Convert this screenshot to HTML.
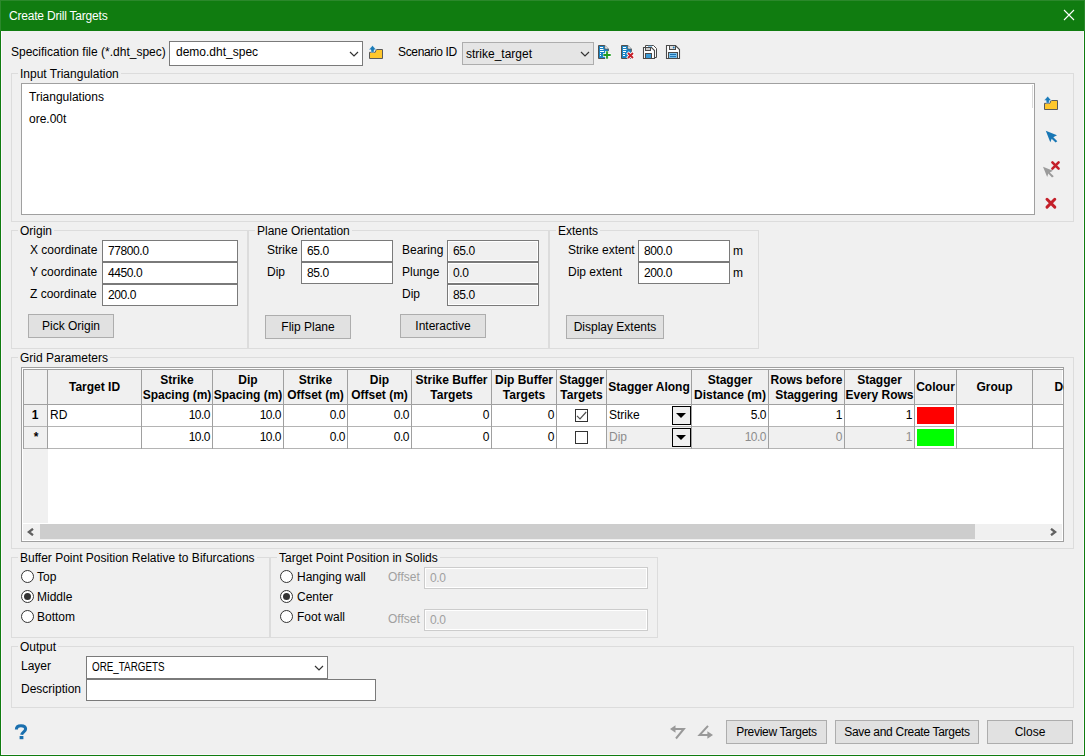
<!DOCTYPE html>
<html><head><meta charset="utf-8">
<style>
*{box-sizing:border-box;margin:0;padding:0}
html,body{width:1085px;height:756px;overflow:hidden;background:#f0f0f0}
body{font-family:"Liberation Sans",sans-serif;font-size:12px;color:#000;position:relative}
.a{position:absolute}
.t{position:absolute;white-space:nowrap;line-height:14px;height:14px}
.win{left:0;top:0;width:1085px;height:756px;border:1px solid #107c10;border-top:none;background:#f0f0f0}
.title{left:0;top:0;width:1085px;height:31px;background:#107c10}
.edit{position:absolute;background:#fff;border:1px solid #7a7a7a}
.ro{position:absolute;background:#f0f0f0;border:1px solid #7a7a7a;box-shadow:inset 0 0 0 1px #fff}
.dis{position:absolute;background:#f0f0f0;border:1px solid #cccccc;box-shadow:inset 0 0 0 1px #fff}
.btn{position:absolute;background:#e1e1e1;border:1px solid #adadad;text-align:center}
.grp{position:absolute;border:1px solid #dcdcdc}
.gt{position:absolute;white-space:nowrap;line-height:14px;height:14px;background:#f0f0f0;padding:0 2px;margin-top:1px}
.vl{position:absolute;width:1px;background:#a0a0a0}
.hl{position:absolute;height:1px;background:#a0a0a0}
.hd{position:absolute;font-weight:bold;text-align:center;line-height:15px;white-space:nowrap;font-size:12px}
.num{position:absolute;text-align:right;line-height:14px;white-space:nowrap;letter-spacing:-0.5px}
.radio{position:absolute;width:13px;height:13px;border:1px solid #333;border-radius:50%;background:#fff}
.radio.on::after{content:"";position:absolute;left:2px;top:2px;width:7px;height:7px;border-radius:50%;background:#333}
.gray{color:#a0a0a0}
#tbl .gray{color:#8c8c8c}
</style></head><body>
<div class="a win"></div>
<div class="a title"></div>
<div class="a" style="left:0;top:0;width:1085px;height:1px;background:#2b882b"></div>
<div class="a" style="left:0;top:0;width:1px;height:31px;background:#2b882b"></div>
<div class="a" style="left:1084px;top:0;width:1px;height:31px;background:#2b882b"></div>
<div class="a" style="left:1px;top:31px;width:1px;height:724px;background:#fcf8fc"></div>
<div class="a" style="left:1083px;top:31px;width:1px;height:724px;background:#fcf8fc"></div>
<div class="a" style="left:1px;top:754px;width:1083px;height:1px;background:#fcf8fc"></div>
<div class="t" style="left:9px;top:9px;color:#fff;letter-spacing:-0.2px">Create Drill Targets</div>
<svg class="a" style="left:1063px;top:9px" width="12" height="12" viewBox="0 0 12 12"><path d="M1 1L11 11M11 1L1 11" stroke="#fff" stroke-width="1.1"/></svg>

<!-- spec row -->
<div class="t" style="left:11px;top:45px">Specification file (*.dht_spec)</div>
<div class="edit" style="left:169px;top:41px;width:194px;height:25px"></div>
<div class="t" style="left:176px;top:45px">demo.dht_spec</div>
<svg class="a" style="left:349px;top:50.7px" width="10" height="6" viewBox="0 0 10 6"><path d="M1 1L5 5L9 1" stroke="#333" fill="none" stroke-width="1.2"/></svg>
<div class="t" style="left:398px;top:45px;letter-spacing:-0.35px">Scenario ID</div>
<div class="btn" style="left:462px;top:42px;width:132px;height:23px;background:#e5e5e5"></div>
<div class="t" style="left:466px;top:47px">strike_target</div>
<svg class="a" style="left:580px;top:50.7px" width="10" height="6" viewBox="0 0 10 6"><path d="M1 1L5 5L9 1" stroke="#333" fill="none" stroke-width="1.2"/></svg>

<!-- Input Triangulation -->
<div class="grp" style="left:11px;top:73px;width:1063px;height:149px"></div>
<div class="gt" style="left:18px;top:66px">Input Triangulation</div>
<div class="a" style="left:21px;top:83px;width:1014px;height:132px;background:#fff;border:1px solid #a0a0a0"></div>
<div class="a" style="left:1032px;top:85px;width:1px;height:23px;background:#dadada"></div>
<div class="t" style="left:29px;top:90px">Triangulations</div>
<div class="t" style="left:29px;top:112px">ore.00t</div>

<!-- Origin -->
<div class="grp" style="left:11px;top:230px;width:237px;height:119px"></div>
<div class="gt" style="left:18px;top:223px">Origin</div>
<div class="t" style="left:30px;top:243px">X coordinate</div>
<div class="t" style="left:30px;top:265px">Y coordinate</div>
<div class="t" style="left:30px;top:287px">Z coordinate</div>
<div class="edit" style="left:102px;top:240px;width:136px;height:22px"></div>
<div class="edit" style="left:102px;top:262px;width:136px;height:22px"></div>
<div class="edit" style="left:102px;top:284px;width:136px;height:22px"></div>
<div class="t" style="left:108px;top:244px;letter-spacing:-0.4px">77800.0</div>
<div class="t" style="left:108px;top:266px;letter-spacing:-0.4px">4450.0</div>
<div class="t" style="left:108px;top:288px;letter-spacing:-0.4px">200.0</div>
<div class="btn" style="left:28px;top:314px;width:86px;height:24px;line-height:22px">Pick Origin</div>

<!-- Plane Orientation -->
<div class="grp" style="left:248px;top:230px;width:301px;height:119px"></div>
<div class="gt" style="left:255px;top:223px">Plane Orientation</div>
<div class="t" style="left:267px;top:243px">Strike</div>
<div class="t" style="left:267px;top:265px">Dip</div>
<div class="edit" style="left:301px;top:240px;width:92px;height:22px"></div>
<div class="edit" style="left:301px;top:262px;width:92px;height:22px"></div>
<div class="t" style="left:307px;top:244px;letter-spacing:-0.4px">65.0</div>
<div class="t" style="left:307px;top:266px;letter-spacing:-0.4px">85.0</div>
<div class="t" style="left:402px;top:243px">Bearing</div>
<div class="t" style="left:402px;top:265px">Plunge</div>
<div class="t" style="left:402px;top:287px">Dip</div>
<div class="ro" style="left:447px;top:240px;width:92px;height:22px"></div>
<div class="ro" style="left:447px;top:262px;width:92px;height:22px"></div>
<div class="ro" style="left:447px;top:284px;width:92px;height:22px"></div>
<div class="t" style="left:453px;top:244px;letter-spacing:-0.4px">65.0</div>
<div class="t" style="left:453px;top:266px;letter-spacing:-0.4px">0.0</div>
<div class="t" style="left:453px;top:288px;letter-spacing:-0.4px">85.0</div>
<div class="btn" style="left:265px;top:315px;width:86px;height:24px;line-height:22px">Flip Plane</div>
<div class="btn" style="left:400px;top:314px;width:86px;height:24px;line-height:22px">Interactive</div>

<!-- Extents -->
<div class="grp" style="left:549px;top:230px;width:210px;height:119px"></div>
<div class="gt" style="left:556px;top:223px">Extents</div>
<div class="t" style="left:568px;top:243px">Strike extent</div>
<div class="t" style="left:568px;top:265px">Dip extent</div>
<div class="edit" style="left:638px;top:240px;width:92px;height:22px"></div>
<div class="edit" style="left:638px;top:262px;width:92px;height:22px"></div>
<div class="t" style="left:644px;top:244px;letter-spacing:-0.4px">800.0</div>
<div class="t" style="left:644px;top:266px;letter-spacing:-0.4px">200.0</div>
<div class="t" style="left:733px;top:244px">m</div>
<div class="t" style="left:733px;top:266px">m</div>
<div class="btn" style="left:566px;top:315px;width:98px;height:24px;line-height:22px">Display Extents</div>

<!-- Grid Parameters -->
<div class="grp" style="left:11px;top:357px;width:1063px;height:192px"></div>
<div class="gt" style="left:18px;top:350px">Grid Parameters</div>
<div id="tbl"><div class="a" style="left:0;top:0;width:1064px;height:756px;overflow:hidden"><div class="a" style="left:21px;top:367px;width:1043px;height:175px;border:1px solid #a0a0a0;background:#fff"></div>
<div class="a" style="left:23px;top:369px;width:1039px;height:35px;background:#f0f0f0"></div>
<div class="a" style="left:23px;top:369px;width:25px;height:154px;background:#f0f0f0"></div>
<div class="a" style="left:607px;top:427px;width:307px;height:21px;background:#f0f0f0"></div>
<div class="hl" style="left:23px;top:369px;width:1040px"></div>
<div class="hl" style="left:23px;top:404px;width:1040px"></div>
<div class="hl" style="left:23px;top:426px;width:1040px;background:#b4b4b4"></div>
<div class="hl" style="left:23px;top:448px;width:1040px;background:#b4b4b4"></div>
<div class="vl" style="left:23px;top:369px;height:80px"></div>
<div class="vl" style="left:47px;top:369px;height:80px"></div>
<div class="vl" style="left:141px;top:369px;height:80px"></div>
<div class="vl" style="left:212px;top:369px;height:80px"></div>
<div class="vl" style="left:283px;top:369px;height:80px"></div>
<div class="vl" style="left:347px;top:369px;height:80px"></div>
<div class="vl" style="left:411px;top:369px;height:80px"></div>
<div class="vl" style="left:491px;top:369px;height:80px"></div>
<div class="vl" style="left:556px;top:369px;height:80px"></div>
<div class="vl" style="left:606px;top:369px;height:80px"></div>
<div class="vl" style="left:691px;top:369px;height:80px"></div>
<div class="vl" style="left:768px;top:369px;height:80px"></div>
<div class="vl" style="left:844px;top:369px;height:80px"></div>
<div class="vl" style="left:914px;top:369px;height:80px"></div>
<div class="vl" style="left:956px;top:369px;height:80px"></div>
<div class="vl" style="left:1032px;top:369px;height:80px"></div>
<div class="hd" style="left:48px;top:380px;width:93px">Target ID</div>
<div class="hd" style="left:142px;top:373px;width:70px">Strike<br>Spacing (m)</div>
<div class="hd" style="left:213px;top:373px;width:70px">Dip<br>Spacing (m)</div>
<div class="hd" style="left:284px;top:373px;width:63px">Strike<br>Offset (m)</div>
<div class="hd" style="left:348px;top:373px;width:63px">Dip<br>Offset (m)</div>
<div class="hd" style="left:412px;top:373px;width:79px">Strike Buffer<br>Targets</div>
<div class="hd" style="left:492px;top:373px;width:64px">Dip Buffer<br>Targets</div>
<div class="hd" style="left:557px;top:373px;width:49px">Stagger<br>Targets</div>
<div class="hd" style="left:607px;top:380px;width:84px">Stagger Along</div>
<div class="hd" style="left:692px;top:373px;width:76px">Stagger<br>Distance (m)</div>
<div class="hd" style="left:769px;top:373px;width:75px">Rows before<br>Staggering</div>
<div class="hd" style="left:845px;top:373px;width:69px">Stagger<br>Every Rows</div>
<div class="hd" style="left:915px;top:380px;width:41px">Colour</div>
<div class="hd" style="left:957px;top:380px;width:75px">Group</div>
<div class="hd" style="left:1033px;top:380px;width:109px">Description</div>
<div class="hd" style="left:23px;top:408px;width:24px;font-size:12px">1</div>
<div class="hd" style="left:24px;top:430px;width:24px;font-size:12px">*</div>
<div class="t" style="left:50px;top:408px">RD</div>
<div class="num" style="left:132px;top:408px;width:78px">10.0</div>
<div class="num" style="left:203px;top:408px;width:78px">10.0</div>
<div class="num" style="left:267px;top:408px;width:78px">0.0</div>
<div class="num" style="left:331px;top:408px;width:78px">0.0</div>
<div class="num" style="left:411px;top:408px;width:78px">0</div>
<div class="num" style="left:476px;top:408px;width:78px">0</div>
<div class="num" style="left:688px;top:408px;width:78px">5.0</div>
<div class="num" style="left:764px;top:408px;width:78px">1</div>
<div class="num" style="left:834px;top:408px;width:78px">1</div>
<div class="num" style="left:132px;top:430px;width:78px">10.0</div>
<div class="num" style="left:203px;top:430px;width:78px">10.0</div>
<div class="num" style="left:267px;top:430px;width:78px">0.0</div>
<div class="num" style="left:331px;top:430px;width:78px">0.0</div>
<div class="num" style="left:411px;top:430px;width:78px">0</div>
<div class="num" style="left:476px;top:430px;width:78px">0</div>
<div class="num gray" style="left:688px;top:430px;width:78px">10.0</div>
<div class="num gray" style="left:764px;top:430px;width:78px">0</div>
<div class="num gray" style="left:834px;top:430px;width:78px">1</div>
<div class="a" style="left:575px;top:409px;width:13px;height:13px;border:1px solid #333;background:#fff"></div>
<svg class="a" style="left:575px;top:409px" width="13" height="13" viewBox="0 0 13 13"><path d="M2 6.8L5 9.8L11.2 3" stroke="#505050" stroke-width="1.2" fill="none"/></svg>
<div class="a" style="left:575px;top:431px;width:13px;height:13px;border:1px solid #333;background:#fff"></div>
<div class="t" style="left:609px;top:408px">Strike</div>
<div class="t gray" style="left:609px;top:430px">Dip</div>
<div class="a" style="left:672px;top:406px;width:19px;height:19px;border:1px solid #000;background:#f0f0f0"></div>
<svg class="a" style="left:676px;top:413px" width="10" height="5" viewBox="0 0 10 5"><path d="M0 0H10L5 5Z" fill="#000"/></svg>
<div class="a" style="left:672px;top:428px;width:19px;height:19px;border:1px solid #000;background:#f0f0f0"></div>
<svg class="a" style="left:676px;top:435px" width="10" height="5" viewBox="0 0 10 5"><path d="M0 0H10L5 5Z" fill="#000"/></svg>
<div class="a" style="left:917px;top:407px;width:37px;height:17px;background:#ff0000"></div>
<div class="a" style="left:917px;top:429px;width:37px;height:17px;background:#00ff00"></div>
<div class="a" style="left:23px;top:524px;width:1039px;height:16px;background:#f0f0f0"></div>
<div class="a" style="left:40px;top:524px;width:935px;height:15px;background:#cdcdcd"></div>
<svg class="a" style="left:27px;top:528px" width="8" height="8" viewBox="0 0 8 8"><path d="M6 0.8L1.8 4L6 7.2" stroke="#606060" stroke-width="2.3" fill="none"/></svg>
<svg class="a" style="left:1049px;top:528px" width="8" height="8" viewBox="0 0 8 8"><path d="M2 0.8L6.2 4L2 7.2" stroke="#606060" stroke-width="2.3" fill="none"/></svg></div></div><!--/tbl-->

<!-- Buffer point -->
<div class="grp" style="left:11px;top:557px;width:259px;height:81px"></div>
<div class="gt" style="left:18px;top:550px">Buffer Point Position Relative to Bifurcations</div>
<div class="radio" style="left:21px;top:570px"></div><div class="t" style="left:37px;top:570px">Top</div>
<div class="radio on" style="left:21px;top:590px"></div><div class="t" style="left:37px;top:590px">Middle</div>
<div class="radio" style="left:21px;top:610px"></div><div class="t" style="left:37px;top:610px">Bottom</div>

<!-- Target point -->
<div class="grp" style="left:270px;top:557px;width:388px;height:81px"></div>
<div class="gt" style="left:277px;top:550px">Target Point Position in Solids</div>
<div class="radio" style="left:280px;top:570px"></div><div class="t" style="left:297px;top:570px">Hanging wall</div>
<div class="radio on" style="left:280px;top:590px"></div><div class="t" style="left:297px;top:590px">Center</div>
<div class="radio" style="left:280px;top:610px"></div><div class="t" style="left:297px;top:610px">Foot wall</div>
<div class="t gray" style="left:388px;top:570px">Offset</div>
<div class="t gray" style="left:388px;top:612px">Offset</div>
<div class="dis" style="left:424px;top:567px;width:224px;height:22px"></div>
<div class="dis" style="left:424px;top:609px;width:224px;height:22px"></div>
<div class="t gray" style="left:430px;top:571px;letter-spacing:-0.4px">0.0</div>
<div class="t gray" style="left:430px;top:613px;letter-spacing:-0.4px">0.0</div>

<!-- Output -->
<div class="grp" style="left:11px;top:646px;width:1063px;height:62px"></div>
<div class="gt" style="left:18px;top:639px">Output</div>
<div class="t" style="left:21px;top:659px">Layer</div>
<div class="t" style="left:21px;top:682px">Description</div>
<div class="edit" style="left:86px;top:656px;width:242px;height:23px"></div>
<div class="t" style="left:92px;top:660px;transform:scaleX(0.82);transform-origin:0 0">ORE_TARGETS</div>
<svg class="a" style="left:314px;top:664.7px" width="10" height="6" viewBox="0 0 10 6"><path d="M1 1L5 5L9 1" stroke="#333" fill="none" stroke-width="1.2"/></svg>
<div class="edit" style="left:86px;top:679px;width:290px;height:22px"></div>


<!-- icons -->
<svg class="a" style="left:367px;top:44px" width="17" height="16" viewBox="0 0 17 16">
<path d="M2.5 8.3H8.2L9.3 5.5H15.5V14.5H2.5Z" fill="#ffc72c" stroke="#5a5a5a" stroke-width="1"/>
<path d="M5.5 1.5L9.2 5.8H7.1V8.2H4V5.8H1.8Z" fill="#1a7ab8" stroke="#fff" stroke-width="0.4"/>
</svg>
<svg class="a" style="left:597px;top:44px" width="16" height="16" viewBox="0 0 16 16">
<path d="M1.5 1.5H7.8L11.3 5V14.5H1.5Z" fill="#1a85c6" stroke="#505050" stroke-width="1"/>
<path d="M7.8 1.5V5H11.3" fill="#fff" stroke="#505050" stroke-width="0.8"/>
<path d="M3 3.5H6M3 5.5H6.5M3 7.5H7M3 9.5H4M3 11.5H4" stroke="#fff" stroke-width="1"/>
<path d="M6 9.5H15.5M6 12.5" stroke="none"/>
<rect x="6.3" y="8" width="9" height="8" fill="#f0f0f0" opacity="0"/>
<path d="M10 7V15M6 11H14" stroke="#fff" stroke-width="3.6"/>
<path d="M10 7.3V14.7M6.3 11H13.7" stroke="#1f9a1f" stroke-width="1.8"/>
</svg>
<svg class="a" style="left:620px;top:44px" width="16" height="16" viewBox="0 0 16 16">
<path d="M1.5 1.5H7.8L11.3 5V14.5H1.5Z" fill="#1a85c6" stroke="#505050" stroke-width="1"/>
<path d="M7.8 1.5V5H11.3" fill="#fff" stroke="#505050" stroke-width="0.8"/>
<path d="M3 3.5H6M3 5.5H6.5M3 7.5H6M3 9.5H5M3 11.5H5" stroke="#fff" stroke-width="1"/>
<path d="M7.5 8.5L13.5 14.5M13.5 8.5L7.5 14.5" stroke="#fff" stroke-width="3.6"/>
<path d="M8 9L13 14M13 9L8 14" stroke="#c4202a" stroke-width="1.9"/>
</svg>
<svg class="a" style="left:642px;top:44px" width="16" height="16" viewBox="0 0 16 16">
<path d="M3.5 1.5H11.5L14.5 4.5V13.5H12V6.5L9.5 3.5H3.5Z" fill="#fff" stroke="#4a4a4a" stroke-width="1"/><rect x="6" y="1.8" width="4" height="1.5" fill="#8cc4e8"/>
<path d="M1.5 3.5H9.5L12.5 6.5V14.5H1.5Z" fill="#fff" stroke="#4a4a4a" stroke-width="1.1"/>
<rect x="3.5" y="3.5" width="5" height="3" fill="#ccc" stroke="#4a4a4a" stroke-width="1"/>
<rect x="3.5" y="9.5" width="6" height="5" fill="#3a9ad6" stroke="#4a4a4a" stroke-width="1"/>
</svg>
<svg class="a" style="left:665px;top:44px" width="16" height="16" viewBox="0 0 16 16">
<path d="M1.5 1.5H10.5L14.5 5.5V14.5H1.5Z" fill="#fff" stroke="#4a4a4a" stroke-width="1.1"/>
<rect x="4.5" y="1.5" width="6" height="4" fill="#ddd" stroke="#4a4a4a" stroke-width="1"/>
<circle cx="8.7" cy="3.5" r="0.9" fill="#1a7ab8"/>
<rect x="3.5" y="8.5" width="9" height="6" fill="#7cc3ee" stroke="#4a4a4a" stroke-width="1"/>
<path d="M5 10.5H11M5 12.6H11" stroke="#1a6fb0" stroke-width="1"/>
</svg>
<svg class="a" style="left:1041px;top:95px" width="18" height="16" viewBox="0 0 18 16">
<path d="M3.5 8.3H8.9L10 5.5H16.5V14.5H3.5Z" fill="#ffc72c" stroke="#5a5a5a" stroke-width="1"/>
<path d="M6.7 1.3L10.4 5.6H8.3V8.1H5.2V5.6H3Z" fill="#1a7ab8" stroke="#fff" stroke-width="0.4"/>
</svg>
<svg class="a" style="left:1044px;top:129px" width="16" height="16" viewBox="0 0 16 16">
<path d="M1.8 1.8L13 6.3L9.3 8.2L13.3 12.2L11.6 13.6L7.7 9.7L6.3 13.3Z" fill="#1877b5"/>
</svg>
<svg class="a" style="left:1041px;top:159px" width="20" height="20" viewBox="0 0 20 20">
<path d="M2 7.7L12 11.8L8.8 13.4L12.8 17.3L11 18.4L7.3 14.6L6.2 18Z" fill="#9b9b9b"/>
<path d="M11.4 3.4L17.6 9.6M17.6 3.4L11.4 9.6" stroke="#c4202a" stroke-width="2.6" stroke-linecap="round"/>
</svg>
<svg class="a" style="left:1043px;top:195px" width="16" height="16" viewBox="0 0 16 16">
<path d="M4 4.3L11.8 12.1M11.8 4.3L4 12.1" stroke="#c4202a" stroke-width="3" stroke-linecap="round"/>
</svg>
<svg class="a" style="left:666px;top:722px" width="20" height="20" viewBox="0 0 20 20">
<path d="M4 7L9.5 3.3V10.7Z" fill="#999"/>
<path d="M8 7H17.8L10 16.5" stroke="#999" stroke-width="2" fill="none"/>
</svg>
<svg class="a" style="left:695px;top:722px" width="20" height="20" viewBox="0 0 20 20">
<path d="M13 3.8L4.6 13H14" stroke="#999" stroke-width="2" fill="none"/>
<path d="M18 13L12.4 9.3V16.7Z" fill="#999"/>
</svg>

<!-- bottom -->
<svg class="a" style="left:14px;top:724px" width="14" height="16" viewBox="0 0 14 16"><path d="M2.4 5.4C2.4 2.9 4.4 1.7 7 1.7C9.8 1.7 11.6 3.1 11.6 5.1C11.6 7.6 8.2 8 7.6 10.8" stroke="#1a6fae" stroke-width="3.1" fill="none"/><rect x="5.6" y="12" width="3.8" height="3.2" fill="#1a6fae"/></svg>
<div class="btn" style="left:726px;top:720px;width:101px;height:24px;line-height:22px;letter-spacing:-0.3px">Preview Targets</div>
<div class="btn" style="left:835px;top:720px;width:144px;height:24px;line-height:22px;letter-spacing:-0.3px">Save and Create Targets</div>
<div class="btn" style="left:987px;top:720px;width:86px;height:24px;line-height:22px">Close</div>
</body></html>
